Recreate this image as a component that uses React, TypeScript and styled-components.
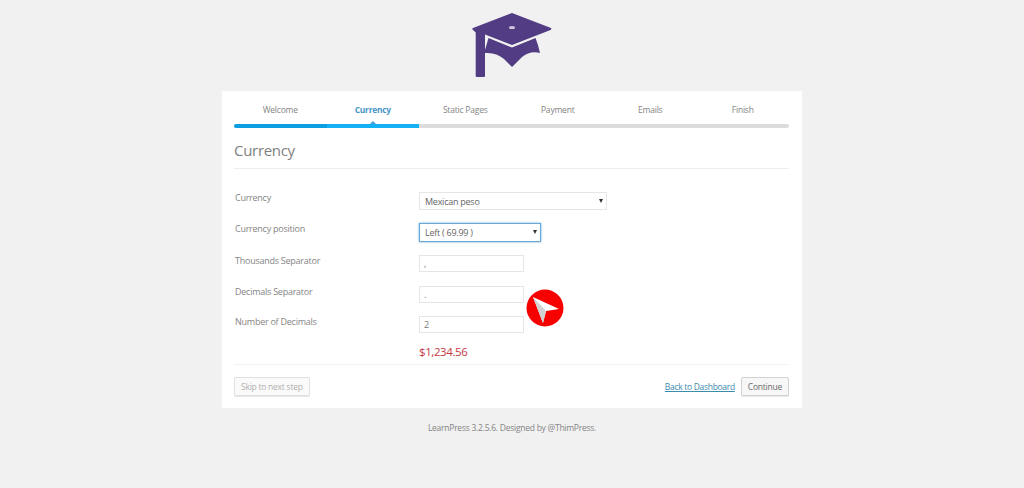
import React from 'react';
import styled, { createGlobalStyle } from 'styled-components';

const GlobalStyle = createGlobalStyle`
  html, body {
    margin: 0;
    padding: 0;
    background: #f1f1f1;
    font-family: 'Open Sans', 'Noto Sans', sans-serif;
    color: #777;
  }
  * {
    box-sizing: border-box;
  }
`;

const Page = styled.div`
  width: 1024px;
  height: 488px;
  display: flex;
  flex-direction: column;
  align-items: center;
  padding-top: 12px;
  overflow: hidden;
`;

const LogoMark = styled.svg`
  display: block;
  width: 80px;
  height: 66px;
  margin-bottom: 13px;
`;

const Card = styled.main`
  position: relative;
  width: 580px;
  height: 317px;
  background: #fff;
  padding: 0 13px 0 12px;
`;

const Steps = styled.ol`
  display: grid;
  grid-template-columns: repeat(6, 1fr);
  margin: 0;
  padding: 12px 0 0;
  list-style: none;
`;

const Step = styled.li<{ $active?: boolean }>`
  position: relative;
  height: 21px;
  text-align: center;
  font-size: 8.5px;
  line-height: 14px;
  letter-spacing: ${(p) => (p.$active ? -0.3 : -0.2)}px;
  font-weight: ${(p) => (p.$active ? 700 : 400)};
  color: ${(p) => (p.$active ? '#4a97c9' : '#858585')};

  ${(p) =>
    p.$active &&
    `
    &::after {
      content: '';
      position: absolute;
      left: 50%;
      bottom: 0;
      margin-left: -3px;
      border: 3px solid transparent;
      border-top: 0;
      border-bottom-color: #4a9fd0;
    }
  `}
`;

const Progress = styled.div`
  display: flex;
  height: 4px;
  border-radius: 2px;
  overflow: hidden;
  background: #dcdcdc;
`;

const ProgressPart = styled.div<{ $color: string }>`
  width: 92.5px;
  background: ${(p) => p.$color};
`;

const Title = styled.h1`
  margin: 0;
  padding: 11px 0 7px;
  height: 41px;
  border-bottom: 1px solid #eeeeee;
  font-size: 15px;
  line-height: 22px;
  letter-spacing: -0.3px;
  font-weight: 400;
  color: #808080;
`;

const Form = styled.form`
  display: flex;
  flex-direction: column;
  padding: 23px 0 0 1px;
`;

const Row = styled.div<{ $height: number }>`
  display: grid;
  grid-template-columns: 184px 1fr;
  height: ${(p) => p.$height}px;
`;

const Label = styled.label`
  font-size: 9px;
  line-height: 12px;
  letter-spacing: -0.25px;
  color: #858585;
`;

const SelectWrap = styled.div<{ $width: number; $focus?: boolean }>`
  position: relative;
  width: ${(p) => p.$width}px;
  height: ${(p) => (p.$focus ? 19 : 18)}px;
`;

const Select = styled.select<{ $focus?: boolean }>`
  appearance: none;
  display: block;
  width: 100%;
  height: 100%;
  padding: 0 0 0 5px;
  background: #fff;
  border: 1px solid ${(p) => (p.$focus ? '#6aa6d8' : '#e6e6e6')};
  box-shadow: ${(p) => (p.$focus ? '0 0 2px rgba(30, 140, 190, 0.7)' : 'none')};
  border-radius: 0;
  outline: none;
  font-family: inherit;
  font-size: 9px;
  letter-spacing: -0.25px;
  color: #666;
`;

const Caret = styled.span`
  position: absolute;
  top: 7px;
  right: 4px;
  border: 2.5px solid transparent;
  border-bottom: 0;
  border-top: 4px solid #333;
  pointer-events: none;
`;

const TextInput = styled.input`
  display: block;
  width: 105px;
  height: 17px;
  padding: 0 4px;
  background: #fff;
  border: 1px solid #e6e6e6;
  border-radius: 0;
  outline: none;
  font-family: inherit;
  font-size: 9px;
  color: #777;
`;

const Price = styled.div`
  margin: 3px 0 0 184px;
  height: 17px;
  font-size: 11.5px;
  line-height: 17px;
  letter-spacing: -0.4px;
  color: #c5393f;
`;

const Footer = styled.footer`
  display: flex;
  align-items: center;
  height: 44px;
  margin-top: 4px;
  border-top: 1px solid #f2f2f2;
`;

const Button = styled.button<{ $disabled?: boolean }>`
  height: 19px;
  padding: 0 6px;
  background: ${(p) => (p.$disabled ? '#fafafa' : '#f7f7f7')};
  border: 1px solid ${(p) => (p.$disabled ? '#e0e0e0' : '#d2d2d2')};
  border-radius: 2px;
  box-shadow: 0 1px 0 #e8e8e8;
  font-family: inherit;
  font-size: 8.5px;
  letter-spacing: -0.24px;
  color: ${(p) => (p.$disabled ? '#b0b0b0' : '#6a6a6a')};
`;

const FooterRight = styled.div`
  display: flex;
  align-items: center;
  gap: 6px;
  margin-left: auto;
`;

const BackLink = styled.a`
  font-size: 8.5px;
  letter-spacing: -0.3px;
  color: #3b8bad;
  text-decoration: underline;
`;

const Credit = styled.p`
  margin: 14px 0 0;
  font-size: 8.5px;
  line-height: 12px;
  letter-spacing: -0.25px;
  color: #858585;
`;

// pointer badge sits on top of the form, next to the decimals inputs
const CursorBadge = styled.svg`
  position: absolute;
  left: 304px;
  top: 198px;
  width: 38px;
  height: 38px;
`;

const steps = ['Welcome', 'Currency', 'Static Pages', 'Payment', 'Emails', 'Finish'];

export default function App() {
  return (
    <Page>
      <GlobalStyle />
      <LogoMark viewBox="0 0 80 66" aria-label="LearnPress">
        <path
          fill="#523d85"
          d="M40 1 L79 16 Q80 17 78.500 18 L40 33 L13 22.500 L13 64 Q13 65 12 65 L4.700 65 Q3.700 65 3.700 64 L3.700 20.500 L1 18 Q-0.500 17 1 16 Z"
        />
        <path
          fill="#523d85"
          d="M16.500 26 L40 35.500 L63.500 26 Q66 32 68 41 Q58 38.500 50 45 L40 55 L32 47 Q24 40 13 41 L13 38 Z"
        />
        <ellipse cx="40" cy="15.500" rx="3" ry="1.500" fill="#cfc8de" />
      </LogoMark>
      <Card>
        <Steps>
          {steps.map((step) => (
            <Step key={step} $active={step === 'Currency'}>
              {step}
            </Step>
          ))}
        </Steps>
        <Progress>
          <ProgressPart $color="#0c9ee0" />
          <ProgressPart $color="#14b1f5" />
        </Progress>
        <Title>Currency</Title>
        <Form>
          <Row $height={31}>
            <Label>Currency</Label>
            <SelectWrap $width={188}>
              <Select defaultValue="mxn">
                <option value="mxn">Mexican peso</option>
              </Select>
              <Caret />
            </SelectWrap>
          </Row>
          <Row $height={32}>
            <Label>Currency position</Label>
            <SelectWrap $width={122} $focus>
              <Select $focus defaultValue="left">
                <option value="left">Left ( 69.99 )</option>
              </Select>
              <Caret />
            </SelectWrap>
          </Row>
          <Row $height={31}>
            <Label>Thousands Separator</Label>
            <TextInput defaultValue="," />
          </Row>
          <Row $height={30}>
            <Label>Decimals Separator</Label>
            <TextInput defaultValue="." />
          </Row>
          <Row $height={24}>
            <Label>Number of Decimals</Label>
            <TextInput defaultValue="2" />
          </Row>
          <Price>$1,234.56</Price>
        </Form>
        <Footer>
          <Button type="button" $disabled>
            Skip to next step
          </Button>
          <FooterRight>
            <BackLink href="#">Back to Dashboard</BackLink>
            <Button type="button">Continue</Button>
          </FooterRight>
        </Footer>
        <CursorBadge viewBox="0 0 38 38">
          <circle cx="19" cy="19" r="18.500" fill="#f60000" />
          <path d="M7 8 L33 20 L20 22 L17 34 Z" fill="#ffffff" />
          <path d="M7 8 L20 22 L17 34 Z" fill="#d2d2d2" />
        </CursorBadge>
      </Card>
      <Credit>LearnPress 3.2.5.6. Designed by @ThimPress.</Credit>
    </Page>
  );
}
